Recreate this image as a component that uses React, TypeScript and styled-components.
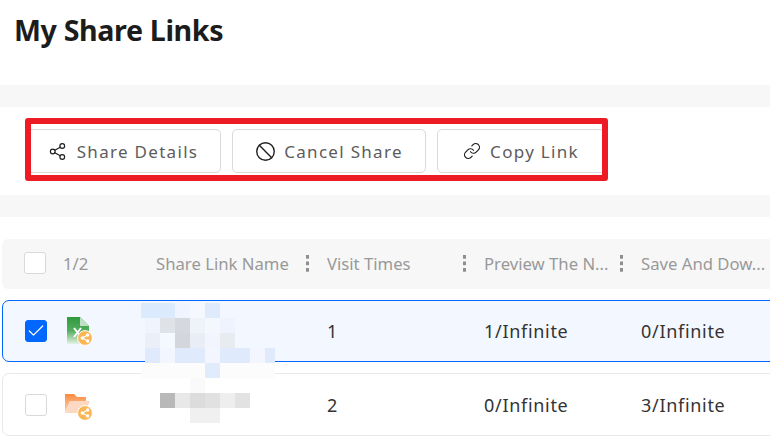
import React from "react";
import styled, { createGlobalStyle } from "styled-components";
import { Share2, Ban, Link as LinkIcon, Check } from "lucide-react";

const Global = createGlobalStyle`
  html, body { margin: 0; padding: 0; background: #fff; width: 770px; height: 447px; overflow: hidden; }
  #root { width: 770px; height: 447px; overflow: hidden; }
  * { box-sizing: border-box; }
`;

const Page = styled.div`
  position: relative;
  width: 770px;
  height: 447px;
  overflow: hidden;
  font-family: "Noto Sans", "Open Sans", sans-serif;
`;
const Title = styled.h1`
  margin: 0;
  height: 85px;
  padding: 10px 0 0 14px;
  font-size: 28.6px;
  line-height: 40px;
  font-weight: 700;
  color: #1c1c1c;
  letter-spacing: -0.35px;
`;
const Band = styled.div`
  height: 22px;
  background: #f7f7f7;
`;
const Toolbar = styled.div`
  height: 88px;
  display: flex;
  align-items: flex-start;
  gap: 11px;
  padding: 22px 0 0 25px;
`;
const ActionButton = styled.button<{ $width: number; $gap: number }>`
  width: ${(p) => p.$width}px;
  height: 44px;
  display: flex;
  align-items: center;
  justify-content: center;
  gap: ${(p) => p.$gap}px;
  padding: 0;
  background: #fff;
  border: 1px solid #d9d9d9;
  border-radius: 5px;
  font-family: inherit;
  font-size: 17px;
  letter-spacing: 1.3px;
  color: #5c5c5c;
  svg { color: #1f1f1f; flex: none; }
`;
const Annotation = styled.div`
  position: absolute;
  left: 25px;
  top: 118px;
  width: 583px;
  height: 63px;
  border: 6px solid #ed1c24;
  border-radius: 3px;
`;
const Table = styled.div`
  margin-top: 22px;
  padding-left: 2px;
  display: flex;
  flex-direction: column;
  gap: 11px;
`;
const HeaderRow = styled.div`
  width: 790px;
  height: 50px;
  padding: 0 0 2px 22px;
  display: grid;
  grid-template-columns: 39px 93px 171px 157px 157px 160px;
  align-items: center;
  background: #f7f7f7;
  border-radius: 6px;
  font-size: 16.7px;
  color: #999;
`;
const HeaderCell = styled.div`
  display: flex;
  align-items: center;
  justify-content: space-between;
  padding-right: 18px;
  min-width: 0;
  white-space: nowrap;
`;
const Dots = styled.i`
  flex: none;
  width: 3px;
  height: 17px;
  background: linear-gradient(#8f8f8f 4px, transparent 4px) 0 0 / 3px 6.5px repeat-y;
`;
const Row = styled.div<{ $selected?: boolean; $height: number }>`
  width: 790px;
  height: ${(p) => p.$height}px;
  padding-left: 22px;
  display: grid;
  grid-template-columns: 38px 93px 171px 157px 157px 160px;
  align-items: center;
  background: ${(p) => (p.$selected ? "#f3f7ff" : "#fff")};
  border: 1px solid ${(p) => (p.$selected ? "#0068ff" : "#e8e8e8")};
  border-radius: 7px;
  font-size: 18px;
  letter-spacing: 0.7px;
  color: #333;
`;
const CheckBox = styled.span<{ $checked?: boolean }>`
  width: 22px;
  height: 22px;
  display: flex;
  align-items: center;
  justify-content: center;
  border-radius: 3px;
  background: ${(p) => (p.$checked ? "#0068ff" : "#fff")};
  border: 1px solid ${(p) => (p.$checked ? "#0068ff" : "#d9d9d9")};
  color: #fff;
`;
const FileIconBox = styled.svg<{ $offset: number }>`
  display: block;
  margin-left: ${(p) => p.$offset}px;
`;
const Mosaic = styled.svg`
  position: absolute;
  left: 141px;
  top: 300px;
`;

const ShareBadge = ({ cx, cy }: { cx: number; cy: number }) => (
  <g>
    <circle cx={cx} cy={cy} r="7.4" fill="#fbb654" stroke="#fff" strokeWidth="1" />
    <path d={`M${cx + 2.7} ${cy - 3}L${cx - 2.7} ${cy}L${cx + 2.7} ${cy + 3}`} stroke="#fff" strokeWidth="1.2" fill="none" />
    <circle cx={cx + 2.7} cy={cy - 3} r="1.7" fill="#fff" />
    <circle cx={cx - 2.7} cy={cy} r="1.7" fill="#fff" />
    <circle cx={cx + 2.7} cy={cy + 3} r="1.7" fill="#fff" />
  </g>
);

const SheetIcon = () => (
  <FileIconBox $offset={3} width="28" height="30" viewBox="0 0 28 30">
    <defs>
      <linearGradient id="sheet" x1="0" y1="0" x2="0" y2="1">
        <stop offset="0" stopColor="#2f9a3c" />
        <stop offset="0.5" stopColor="#53ad5e" />
        <stop offset="1" stopColor="#e4f3e5" />
      </linearGradient>
    </defs>
    <path d="M1 1H14L23 10V28H1Z" fill="url(#sheet)" />
    <path d="M14 1L23 10H14Z" fill="#bfe0c2" />
    <path d="M8 12L15 21M15 12L8 21" stroke="#fff" strokeWidth="2" />
    <ShareBadge cx={19} cy={22} />
  </FileIconBox>
);

const FolderIcon = () => (
  <FileIconBox $offset={2} width="28" height="30" viewBox="0 0 28 30">
    <defs>
      <linearGradient id="folder" x1="0" y1="0" x2="0" y2="1">
        <stop offset="0" stopColor="#fb8a3c" />
        <stop offset="1" stopColor="#fdd7bf" />
      </linearGradient>
    </defs>
    <path d="M0 4H9L12 7H21V11H5L0 23Z" fill="url(#folder)" />
    <path d="M5 11H25L20 23H0Z" fill="#fdd9c4" />
    <ShareBadge cx={20} cy={23} />
  </FileIconBox>
);

type Cell = [number, number, number, string];
const cells: Cell[] = [
  [0, 3, 34, "#dceafe"], [34, 3, 15, "#f0f4fe"], [49, 3, 15, "#f5f8fe"], [64, 3, 15, "#dfeafd"],
  [4, 18, 15, "#f0f4fd"], [19, 18, 15, "#dfe3e8"], [34, 18, 15, "#d5d9de"], [49, 18, 15, "#eef2f9"], [64, 18, 15, "#f4f7fe"], [79, 18, 15, "#eff3fd"],
  [4, 33, 15, "#ebeff8"], [19, 33, 15, "#f4f8ff"], [34, 33, 15, "#d3d7dc"], [49, 33, 15, "#e9edf5"], [64, 33, 15, "#f2f5fd"], [79, 33, 15, "#e8ebf0"],
  [4, 48, 15, "#dfebfd"], [19, 48, 15, "#f2f6ff"], [34, 48, 30, "#e0eafd"], [64, 48, 15, "#f3f6fe"], [79, 48, 30, "#e0eafd"], [109, 48, 15, "#f3f6ff"], [124, 48, 10, "#dfeafd"],
  [0, 63, 134, "#fcfcfc"], [64, 63, 15, "#e0ebfb"],
  [49, 78, 15, "#fafafa"],
  [19, 93, 15, "#b8b8b8"], [34, 93, 15, "#e8e8e8"], [49, 93, 15, "#dcdcdc"], [64, 93, 15, "#e1e1e1"], [79, 93, 15, "#eeeeee"], [94, 93, 15, "#e2e2e2"],
  [49, 108, 30, "#f0f0f0"],
];

export default function App() {
  return (
    <Page>
      <Global />
      <Title>My Share Links</Title>
      <Band />
      <Toolbar>
        <ActionButton $width={196} $gap={10}>
          <Share2 size={19} strokeWidth={1.5} />
          Share Details
        </ActionButton>
        <ActionButton $width={194} $gap={8}>
          <Ban size={21} strokeWidth={1.6} />
          Cancel Share
        </ActionButton>
        <ActionButton $width={168} $gap={9}>
          <LinkIcon size={18} strokeWidth={1.6} />
          Copy Link
        </ActionButton>
      </Toolbar>
      <Band />
      <Table>
        <HeaderRow>
          <CheckBox />
          <HeaderCell>1/2</HeaderCell>
          <HeaderCell>
            <span>Share Link Name</span>
            <Dots />
          </HeaderCell>
          <HeaderCell>
            <span>Visit Times</span>
            <Dots />
          </HeaderCell>
          <HeaderCell>
            <span>Preview The N...</span>
            <Dots />
          </HeaderCell>
          <HeaderCell>
            <span>Save And Dow...</span>
          </HeaderCell>
        </HeaderRow>
        <Row $selected $height={62}>
          <CheckBox $checked>
            <Check size={20} strokeWidth={1.5} />
          </CheckBox>
          <SheetIcon />
          <span />
          <span>1</span>
          <span>1/Infinite</span>
          <span>0/Infinite</span>
        </Row>
        <Row $height={63}>
          <CheckBox />
          <FolderIcon />
          <span />
          <span>2</span>
          <span>0/Infinite</span>
          <span>3/Infinite</span>
        </Row>
      </Table>
      <Mosaic width="134" height="125" viewBox="0 0 134 125">
        {cells.map(([x, y, w, c], i) => (
          <rect key={i} x={x} y={y} width={w} height="15" fill={c} />
        ))}
      </Mosaic>
      <Annotation />
    </Page>
  );
}
